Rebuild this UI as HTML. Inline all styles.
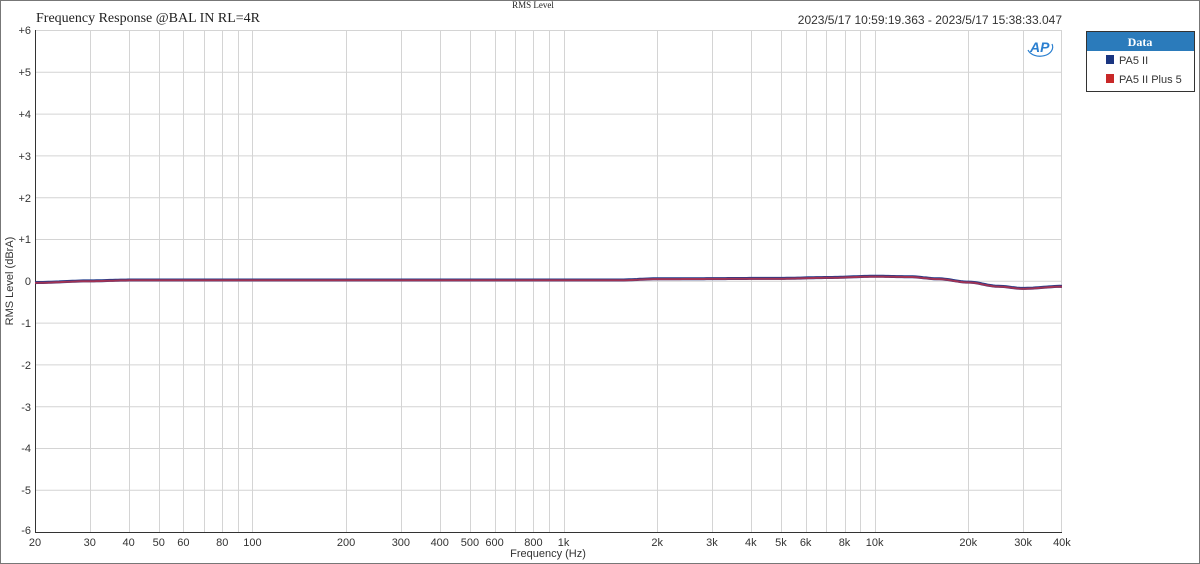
<!DOCTYPE html>
<html><head><meta charset="utf-8"><style>
body{margin:0;background:#fff;}
svg{display:block;font-family:"Liberation Sans",sans-serif;}
</style></head><body>
<svg width="1200" height="564" viewBox="0 0 1200 564" xmlns="http://www.w3.org/2000/svg">
<rect x="0.5" y="0.5" width="1199" height="563" fill="#fff" stroke="#777"/>
<text x="36" y="22" font-family="Liberation Serif,serif" font-size="14" fill="#222">Frequency Response @BAL IN RL=4R</text>
<text x="533" y="8" font-family="Liberation Serif,serif" font-size="9" fill="#222" text-anchor="middle">RMS Level</text>
<text x="1062" y="24" font-size="12" fill="#333" text-anchor="end">2023/5/17 10:59:19.363 - 2023/5/17 15:38:33.047</text>
<g stroke="#d4d4d4" stroke-width="1">
<line x1="35" y1="72.3" x2="1062" y2="72.3"/><line x1="35" y1="114.1" x2="1062" y2="114.1"/>
<line x1="35" y1="155.9" x2="1062" y2="155.9"/><line x1="35" y1="197.7" x2="1062" y2="197.7"/>
<line x1="35" y1="239.5" x2="1062" y2="239.5"/><line x1="35" y1="281.3" x2="1062" y2="281.3"/>
<line x1="35" y1="323.1" x2="1062" y2="323.1"/><line x1="35" y1="364.9" x2="1062" y2="364.9"/>
<line x1="35" y1="406.7" x2="1062" y2="406.7"/><line x1="35" y1="448.5" x2="1062" y2="448.5"/>
<line x1="35" y1="490.3" x2="1062" y2="490.3"/>
<line x1="35" y1="30.5" x2="1062" y2="30.5"/>
<line x1="1061.5" y1="30" x2="1061.5" y2="532"/>
</g>
<g stroke="#d4d4d4" id="vx"></g>
<line x1="35.5" y1="30" x2="35.5" y2="532.5" stroke="#333"/>
<line x1="35" y1="532.5" x2="1062" y2="532.5" stroke="#333"/>
<g font-size="11" fill="#333" text-anchor="end">
<text x="31" y="34">+6</text><text x="31" y="76">+5</text><text x="31" y="118">+4</text><text x="31" y="160">+3</text><text x="31" y="202">+2</text><text x="31" y="243">+1</text><text x="31" y="285">0</text><text x="31" y="327">-1</text><text x="31" y="369">-2</text><text x="31" y="411">-3</text><text x="31" y="452">-4</text><text x="31" y="494">-5</text><text x="31" y="534">-6</text>
</g>
<text transform="translate(13,281) rotate(-90)" font-size="11" fill="#333" text-anchor="middle">RMS Level (dBrA)</text>
<g font-size="11" fill="#333" text-anchor="middle" id="xl"></g>
<text x="548" y="557" font-size="11" fill="#333" text-anchor="middle">Frequency (Hz)</text>
<path id="cb" fill="none" stroke="#1f3a8a" stroke-width="3"/>
<path id="cr" fill="none" stroke="#b8324a" stroke-width="2" opacity="0.85"/>
<g transform="translate(1030,38)">
<text x="0" y="14" font-size="14" font-style="italic" font-weight="bold" fill="#2a7fd0">AP</text>
<path d="M-2 12 A11 8 0 0 0 22 6" fill="none" stroke="#2a7fd0" stroke-width="1.2"/>
</g>
<rect x="1086.5" y="31.5" width="108" height="60" fill="#fff" stroke="#333"/>
<rect x="1087" y="32" width="107" height="19" fill="#2b7bbb"/>
<text x="1140" y="46" font-family="Liberation Serif,serif" font-weight="bold" font-size="12" fill="#fff" text-anchor="middle">Data</text>
<rect x="1106" y="55" width="8" height="9" fill="#1a3580"/>
<text x="1119" y="64" font-size="11" fill="#333">PA5 II</text>
<rect x="1106" y="74" width="8" height="9" fill="#c82828"/>
<text x="1119" y="83" font-size="11" fill="#333">PA5 II Plus  5</text>
</svg>
<script>
var X=function(f){return 35+311.1*Math.log10(f/20);};
var ns="http://www.w3.org/2000/svg";
var vx=document.getElementById('vx'),xl=document.getElementById('xl');
var fs=[30,40,50,60,70,80,90,100,200,300,400,500,600,700,800,900,1000,2000,3000,4000,5000,6000,7000,8000,9000,10000,20000,30000];
fs.forEach(function(f){var l=document.createElementNS(ns,'line');var x=Math.round(X(f))+0.5;l.setAttribute('x1',x);l.setAttribute('x2',x);l.setAttribute('y1',30);l.setAttribute('y2',532);vx.appendChild(l);});
var labs=[[20,'20'],[30,'30'],[40,'40'],[50,'50'],[60,'60'],[80,'80'],[100,'100'],[200,'200'],[300,'300'],[400,'400'],[500,'500'],[600,'600'],[800,'800'],[1000,'1k'],[2000,'2k'],[3000,'3k'],[4000,'4k'],[5000,'5k'],[6000,'6k'],[8000,'8k'],[10000,'10k'],[20000,'20k'],[30000,'30k'],[40000,'40k']];
labs.forEach(function(a){var t=document.createElementNS(ns,'text');t.setAttribute('x',X(a[0]));t.setAttribute('y',546);t.textContent=a[1];xl.appendChild(t);});
var pts=[[20,-0.03],[30,0.01],[40,0.03],[100,0.03],[1500,0.03],[2000,0.06],[5000,0.07],[7000,0.09],[10000,0.12],[13000,0.11],[16000,0.06],[20000,-0.02],[25000,-0.12],[30000,-0.17],[40000,-0.12]];
function path(off){var d='';for(var f=20;f<=40000;f*=1.02){var i=0;while(i<pts.length-2&&pts[i+1][0]<f)i++;var a=pts[i],b=pts[i+1];var t=(Math.log(f)-Math.log(a[0]))/(Math.log(b[0])-Math.log(a[0]));t=Math.max(0,Math.min(1,t));var s=t*t*(3-2*t);var v=a[1]+(b[1]-a[1])*s;d+=(d?'L':'M')+X(f).toFixed(1)+' '+(281.3-v*41.8+off).toFixed(1);}d+='L1062 '+(281.3+0.12*41.8+off);return d;}
document.getElementById('cb').setAttribute('d',path(0));
document.getElementById('cr').setAttribute('d',path(0.3));
</script>
</body></html>
